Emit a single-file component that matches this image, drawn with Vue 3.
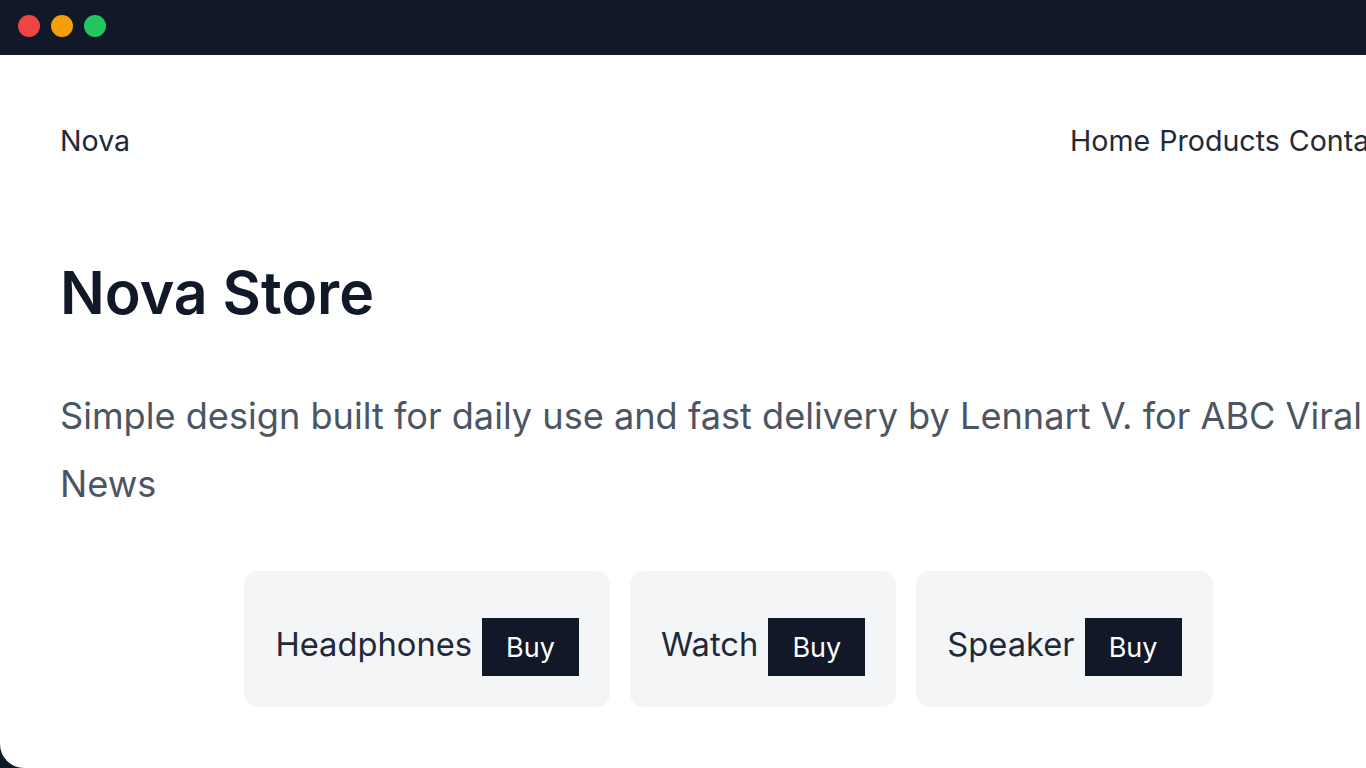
<script setup>
const links = ['Home', 'Products', 'Contact']
const products = ['Headphones', 'Watch', 'Speaker']
</script>

<template>
  <div class="page">
    <header class="titlebar">
      <span class="dot red"></span>
      <span class="dot amber"></span>
      <span class="dot green"></span>
    </header>
    <main class="window">
      <nav class="nav">
        <span>Nova</span>
        <span class="links">
          <a v-for="l in links" :key="l" class="link">{{ l }}</a>
        </span>
      </nav>
      <h1 class="title">Nova Store</h1>
      <p class="lead">Simple design built for daily use and fast delivery by Lennart V. for ABC Viral News</p>
      <section class="cards">
        <article v-for="p in products" :key="p" class="card">
          <span class="name">{{ p }}</span>
          <button class="buy">Buy</button>
        </article>
      </section>
    </main>
  </div>
</template>

<style scoped>
.page {
  width: 1366px;
  height: 768px;
  overflow: hidden;
  background: #111827;
  font-family: Inter, "Liberation Sans", sans-serif;
  color: #111827;
}
.titlebar {
  height: 55px;
  display: flex;
  align-items: center;
  gap: 11px;
  padding-left: 18px;
  padding-bottom: 3px;
  box-sizing: border-box;
}
.dot {
  width: 22px;
  height: 22px;
  border-radius: 50%;
}
.red { background: #ef4444; }
.amber { background: #f59e0b; }
.green { background: #22c55e; }
.window {
  width: 1455px;
  height: 713px;
  box-sizing: border-box;
  background: #fff;
  border-bottom-left-radius: 24px;
  padding: 66px 60px 0;
}
.nav {
  display: flex;
  justify-content: space-between;
  font-size: 28.6px;
  line-height: 40px;
  color: #1f2937;
}
.links {
  display: flex;
  gap: 9px;
}
.title {
  margin: 0;
  padding-top: 96px;
  font-size: 59px;
  line-height: 72px;
  font-weight: 600;
}
.lead {
  margin: 0;
  padding-top: 53px;
  font-size: 36.15px;
  line-height: 68px;
  color: #4b5563;
}
.cards {
  display: flex;
  justify-content: center;
  gap: 20px;
  margin-top: 53px;
  padding-left: 2px;
}
.card {
  display: flex;
  align-items: flex-end;
  gap: 10px;
  height: 136px;
  box-sizing: border-box;
  padding: 0 31px 31px 31px;
  background: #f3f5f7;
  border-radius: 14px;
}
.name {
  font-size: 32.7px;
  line-height: 58px;
  padding-bottom: 3px;
  color: #1f2937;
}
.buy {
  width: 97px;
  height: 58px;
  border: 0;
  padding: 0;
  background: #111827;
  color: #fff;
  font-family: inherit;
  font-size: 27px;
}
</style>
